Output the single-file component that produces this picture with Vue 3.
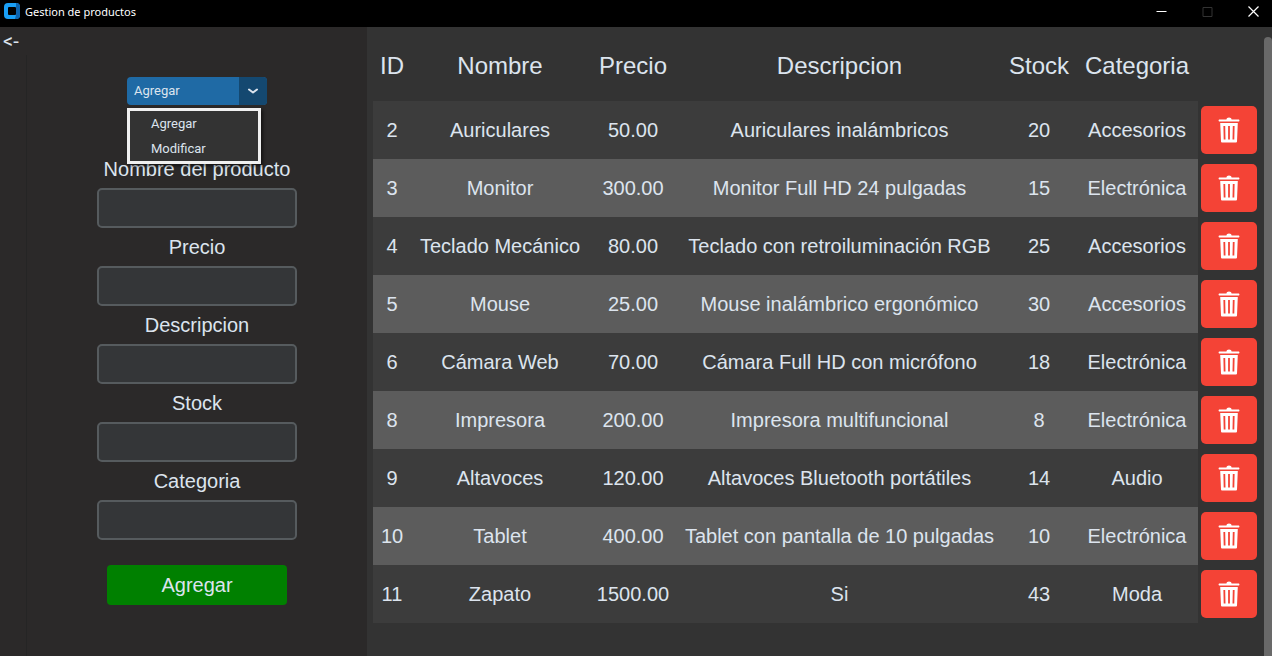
<script setup>
import { ref } from 'vue'

const actions = ['Agregar', 'Modificar']
const action = ref('Agregar')
const menuOpen = ref(true)

const fields = ref([
  { id: 'nombre', label: 'Nombre del producto', value: '' },
  { id: 'precio', label: 'Precio', value: '' },
  { id: 'descripcion', label: 'Descripcion', value: '' },
  { id: 'stock', label: 'Stock', value: '' },
  { id: 'categoria', label: 'Categoria', value: '' }
])

const products = ref([
  { id: 2, name: 'Auriculares', price: '50.00', description: 'Auriculares inalámbricos', stock: 20, category: 'Accesorios' },
  { id: 3, name: 'Monitor', price: '300.00', description: 'Monitor Full HD 24 pulgadas', stock: 15, category: 'Electrónica' },
  { id: 4, name: 'Teclado Mecánico', price: '80.00', description: 'Teclado con retroiluminación RGB', stock: 25, category: 'Accesorios' },
  { id: 5, name: 'Mouse', price: '25.00', description: 'Mouse inalámbrico ergonómico', stock: 30, category: 'Accesorios' },
  { id: 6, name: 'Cámara Web', price: '70.00', description: 'Cámara Full HD con micrófono', stock: 18, category: 'Electrónica' },
  { id: 8, name: 'Impresora', price: '200.00', description: 'Impresora multifuncional', stock: 8, category: 'Electrónica' },
  { id: 9, name: 'Altavoces', price: '120.00', description: 'Altavoces Bluetooth portátiles', stock: 14, category: 'Audio' },
  { id: 10, name: 'Tablet', price: '400.00', description: 'Tablet con pantalla de 10 pulgadas', stock: 10, category: 'Electrónica' },
  { id: 11, name: 'Zapato', price: '1500.00', description: 'Si', stock: 43, category: 'Moda' }
])

function choose(option) {
  action.value = option
  menuOpen.value = false
}

function remove(id) {
  products.value = products.value.filter((p) => p.id !== id)
}
</script>

<template>
  <div class="window">
    <header class="titlebar">
      <svg class="logo" viewBox="0 0 16 16" aria-hidden="true">
        <rect width="16" height="16" rx="4" fill="#1a9ff5" />
        <path d="M12 0a4 4 0 0 1 4 4v8a4 4 0 0 1-4 4h-1l1-4V4z" fill="#0d63ad" />
        <rect x="4" y="4" width="8" height="8" rx="1" fill="#000" />
      </svg>
      <h1 class="title">Gestion de productos</h1>
      <div class="controls">
        <button type="button" class="control" aria-label="Minimizar">
          <svg viewBox="0 0 11 11"><path d="M0.5 5.5h10" stroke="#fff" /></svg>
        </button>
        <button type="button" class="control" aria-label="Maximizar" disabled>
          <svg viewBox="0 0 11 11"><path d="M1 1.5h9v9H1z" stroke="#333" fill="none" /></svg>
        </button>
        <button type="button" class="control" aria-label="Cerrar">
          <svg viewBox="0 0 11 11"><path d="M0.5 0.5l10 10M10.500 0.5l-10 10" stroke="#fff" stroke-width="1.2" /></svg>
        </button>
      </div>
    </header>

    <main class="body">
      <nav class="rail">
        <button type="button" class="back" aria-label="Volver">&lt;-</button>
      </nav>

      <form class="panel" @submit.prevent>
        <div class="picker">
          <select v-model="action" class="select" aria-label="Accion" @mousedown.prevent="menuOpen = !menuOpen">
            <option v-for="option in actions" :key="option">{{ option }}</option>
          </select>
          <span class="arrow">
            <svg viewBox="0 0 12 8"><path d="M2 2.500l4 3 4-3" fill="none" stroke="#dce4ee" stroke-width="2" stroke-linecap="round" stroke-linejoin="round" /></svg>
          </span>
          <div v-if="menuOpen" class="menu">
            <button v-for="option in actions" :key="option" type="button" class="item" @click="choose(option)">{{ option }}</button>
          </div>
        </div>

        <div v-for="field in fields" :key="field.id" class="field">
          <label :for="field.id">{{ field.label }}</label>
          <input :id="field.id" v-model="field.value" type="text">
        </div>

        <button type="submit" class="submit">Agregar</button>
      </form>

      <section class="list">
        <table>
          <colgroup>
            <col class="c-id"><col class="c-name"><col class="c-price"><col><col class="c-stock"><col class="c-category"><col class="c-action">
          </colgroup>
          <thead>
            <tr>
              <th>ID</th>
              <th>Nombre</th>
              <th>Precio</th>
              <th>Descripcion</th>
              <th>Stock</th>
              <th>Categoria</th>
              <td></td>
            </tr>
          </thead>
          <tbody>
            <tr v-for="product in products" :key="product.id">
              <td>{{ product.id }}</td>
              <td>{{ product.name }}</td>
              <td>{{ product.price }}</td>
              <td>{{ product.description }}</td>
              <td>{{ product.stock }}</td>
              <td>{{ product.category }}</td>
              <td class="action">
                <button type="button" class="delete" :aria-label="'Eliminar ' + product.name" @click="remove(product.id)">
                  <svg viewBox="0 0 22 26">
                    <path d="M8.500 2.500V2Q8.500 0.500 11 0.500T13.500 2V2.500H21Q22 3.500 21 4.500H1Q0 3.500 1 2.500Z" fill="#fff" />
                    <path d="M2.200 6H19.800L19 24.500Q19 25.500 18 25.500H4Q3 25.500 3 24.500Z" fill="#fff" />
                    <path d="M6.300 9L6.600 22.500M11 9V22.500M15.700 9L15.400 22.500" stroke="#f44336" stroke-width="1.8" />
                  </svg>
                </button>
              </td>
            </tr>
          </tbody>
        </table>
      </section>
      <div class="track"><div class="thumb"></div></div>
    </main>
  </div>
</template>

<style>
body {
  margin: 0;
  background: #2b2929;
}
</style>

<style scoped>
.window {
  display: flex;
  flex-direction: column;
  min-height: 100vh;
  background: #2b2929;
  color: #dce4ee;
  font: 20px/24px "Liberation Sans", Arial, sans-serif;
}

button,
input,
select {
  box-sizing: border-box;
  margin: 0;
  padding: 0;
  border: 0;
  color: inherit;
  font: inherit;
}

svg {
  display: block;
}

.titlebar {
  display: flex;
  align-items: center;
  height: 27px;
  padding: 0 4px;
  background: #000;
}

.logo {
  width: 16px;
  height: 16px;
  margin-bottom: 5px;
}

.title {
  margin: 0 0 3px 5px;
  color: #fff;
  font: 11px/16px "Noto Sans", "Open Sans", sans-serif;
}

.controls {
  display: flex;
  gap: 1px;
  margin-left: auto;
  margin-right: -8px;
}

.control {
  display: grid;
  place-items: center;
  width: 45px;
  height: 22px;
  margin-bottom: 4px;
  background: none;
}

.control svg {
  width: 11px;
  height: 11px;
}

.body {
  display: flex;
  flex: 1;
}

.rail {
  display: flex;
  flex-direction: column;
  width: 27px;
}

.rail::after {
  content: "";
  flex: 1;
  border-right: 1px solid #252525;
}

.back {
  height: 28px;
  padding-left: 3px;
  background: none;
  color: #dce4ee;
  font: 20px/28px Roboto, sans-serif;
  text-align: left;
}

.panel {
  display: flex;
  flex-direction: column;
  align-items: center;
  width: 340px;
  padding-top: 50px;
}

.picker {
  position: relative;
  width: 140px;
  height: 28px;
  margin-bottom: 45px;
  font: 13px/16px Roboto, sans-serif;
}

.select {
  appearance: none;
  width: 100%;
  height: 100%;
  padding: 0 36px 0 7px;
  border-radius: 4px;
  background: #1f6aa5;
}

.arrow {
  position: absolute;
  top: 0;
  right: 0;
  display: grid;
  place-items: center;
  width: 28px;
  height: 28px;
  border-radius: 0 4px 4px 0;
  background: #144870;
  pointer-events: none;
}

.arrow svg {
  width: 12px;
  height: 8px;
}

.menu {
  position: absolute;
  top: 31px;
  left: 0;
  z-index: 1;
  box-sizing: border-box;
  width: 134px;
  height: 56px;
  border: 3px solid #f0f0f0;
  background: #333;
  box-shadow: 2px 2px 3px #0008;
}

.item {
  display: block;
  width: 100%;
  height: 25px;
  padding-left: 21px;
  background: none;
  text-align: left;
}

.field {
  display: flex;
  flex-direction: column;
}

.field label {
  height: 38px;
  line-height: 38px;
  text-align: center;
}

.field input {
  width: 200px;
  height: 40px;
  padding: 0 8px;
  border: 2px solid #565b5e;
  border-radius: 5px;
  background: #343638;
}

.submit {
  width: 180px;
  height: 40px;
  margin-top: 25px;
  border-radius: 4px;
  background: #008000;
}

.list {
  flex: 1;
  padding: 0 7px 0 6px;
  background: #333;
}

table {
  width: 100%;
  border-collapse: collapse;
  table-layout: fixed;
}

.c-id { width: 38px; }
.c-name { width: 178px; }
.c-price { width: 88px; }
.c-stock { width: 74px; }
.c-category { width: 122px; }
.c-action { width: 59px; }

th,
td {
  padding: 0;
  text-align: center;
  white-space: nowrap;
}

th {
  height: 70px;
  padding-top: 4px;
  font-size: 24px;
  font-weight: normal;
}

tbody td {
  height: 58px;
  background: #3c3c3c;
}

tbody tr:nth-child(even) td {
  background: #5c5c5c;
}

tbody tr td.action {
  padding-left: 3px;
  background: none;
}

.delete {
  display: grid;
  place-items: center;
  width: 56px;
  height: 48px;
  border-radius: 5px;
  background: #f44336;
}

.delete svg {
  width: 22px;
  height: 26px;
}

.track {
  display: flex;
  width: 8px;
  padding-top: 10px;
  background: #333;
}

.thumb {
  flex: 1;
  border-radius: 4px 4px 0 0;
  background: #696969;
}
</style>
